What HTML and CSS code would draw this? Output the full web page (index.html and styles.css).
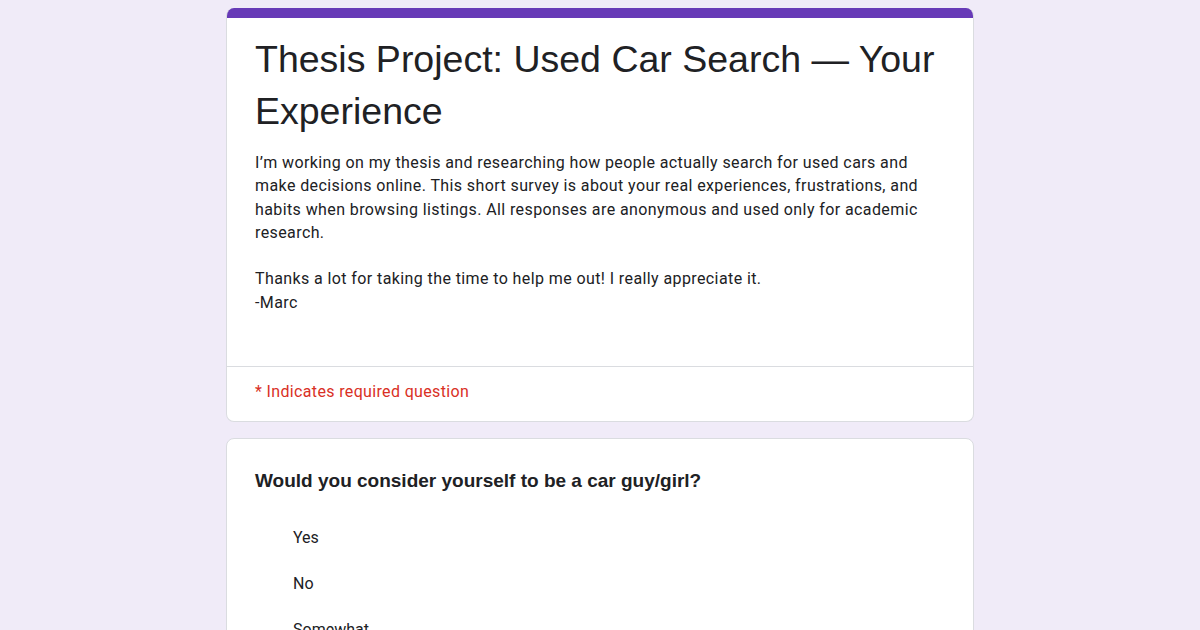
FILE: index.html
```html
<!DOCTYPE html>
<html lang="en">
<head>
<meta charset="utf-8">
<title>Thesis Project: Used Car Search — Your Experience</title>
<link rel="stylesheet" href="styles.css">
</head>
<body>
<main class="form">
  <section class="card header-card">
    <div class="accent"></div>
    <div class="header-body">
      <h1 class="title">Thesis Project: Used Car Search — Your Experience</h1>
      <div class="desc">
        <p>I’m working on my thesis and researching how people actually search for used cars and make decisions online. This short survey is about your real experiences, frustrations, and habits when browsing listings. All responses are anonymous and used only for academic research.</p>
        <p>Thanks a lot for taking the time to help me out! I really appreciate it.<br>-Marc</p>
      </div>
    </div>
    <div class="required-note">* Indicates required question</div>
  </section>
  <section class="card question-card">
    <h2 class="question">Would you consider yourself to be a car guy/girl?</h2>
    <ul class="options">
      <li>Yes</li>
      <li>No</li>
      <li>Somewhat</li>
    </ul>
  </section>
</main>
</body>
</html>
```

FILE: styles.css
```css
html, body {
  margin: 0;
  padding: 0;
}
body {
  background: #f0ebf8;
  font-family: Roboto, "Liberation Sans", Arial, sans-serif;
  color: #202124;
  height: 630px;
  overflow: hidden;
}
.form {
  width: 748px;
  margin: 0 auto;
  padding-top: 8px;
  display: flex;
  flex-direction: column;
  gap: 16px;
}
.card {
  background: #fff;
  border: 1px solid #dadce0;
  border-radius: 8px;
  overflow: hidden;
}
.header-card {
  border-top: none;
}
.accent {
  height: 10px;
  background: #673ab7;
}
.header-body {
  padding: 15px 28px 52px;
  border-bottom: 1px solid #dadce0;
}
.title {
  margin: 0;
  font-family: "Liberation Sans", Arial, sans-serif;
  font-weight: 400;
  font-size: 37.5px;
  line-height: 52px;
  color: #202124;
}
.desc {
  margin-top: 14px;
  font-size: 16px;
  line-height: 23.3px;
  letter-spacing: 0.4px;
  color: #202124;
}
.desc p {
  margin: 0 0 23.3px;
}
.desc p:last-child {
  margin-bottom: 0;
}
.required-note {
  padding: 14px 28px 18px;
  color: #d93025;
  font-size: 16px;
  line-height: 22px;
  letter-spacing: 0.35px;
}
.question-card {
  padding: 28px 28px 0;
}
.question {
  margin: 0;
  font-family: "Liberation Sans", Arial, sans-serif;
  font-weight: 700;
  font-size: 19px;
  line-height: 28px;
  color: #202124;
}
.options {
  list-style: none;
  margin: 31px 0 0;
  padding: 0 0 0 38px;
  display: flex;
  flex-direction: column;
  gap: 23px;
}
.options li {
  font-size: 16px;
  line-height: 23px;
}
```
